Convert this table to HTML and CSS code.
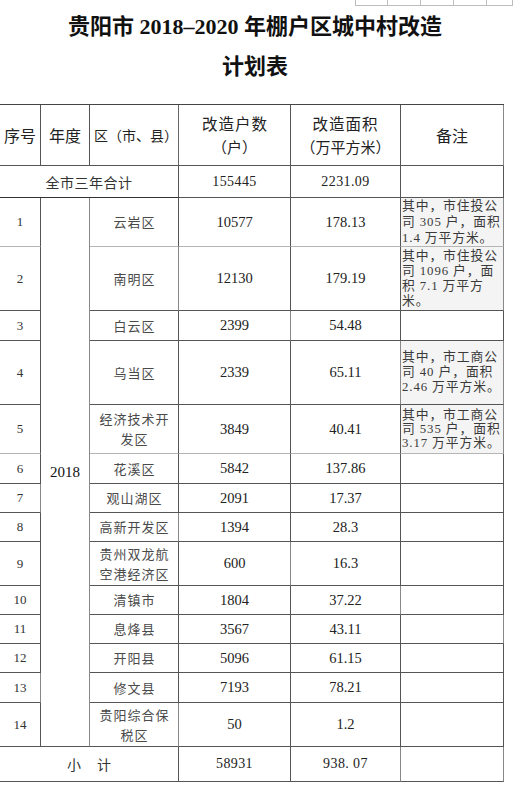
FILE: index.html
```html
<!DOCTYPE html>
<html lang="zh-CN">
<head>
<meta charset="utf-8">
<title>贵阳市 2018–2020 年棚户区城中村改造计划表</title>
<link rel="stylesheet" href="styles.css">
</head>
<body>
<div class="frag">
  <span class="fc"></span><span class="fc"></span><span class="fc"></span><span class="fc"></span><span class="fc last"></span>
</div>
<h1 class="title">贵阳市 2018–2020 年棚户区城中村改造<br>计划表</h1>
<div class="tbl">
  <div class="c h c0">序号</div>
  <div class="c h c1">年度</div>
  <div class="c h c2 nowrap narrow">区（市、县）</div>
  <div class="c h c3 col"><span class="h1">改造户数</span><span class="h2">（户）</span></div>
  <div class="c h c4 col"><span class="h1">改造面积</span><span class="h2">（万平方米）</span></div>
  <div class="c h c5">备注</div>

  <div class="c span3 total">全市三年合计</div>
  <div class="c num mono">155445</div>
  <div class="c num mono">2231.09</div>
  <div class="c"></div>

  <div class="c idx light-b">1</div>
  <div class="c year">2018</div>
  <div class="c dist light-b">云岩区</div>
  <div class="c num light-b">10577</div>
  <div class="c num light-b">178.13</div>
  <div class="c note light-b lh16">其中，市住投公<br>司 305 户，面积<br>1.4 万平方米。</div>

  <div class="c idx">2</div>
  <div class="c dist">南明区</div>
  <div class="c num">12130</div>
  <div class="c num">179.19</div>
  <div class="c note">其中，市住投公<br>司 1096 户，面<br>积 7.1 万平方<br>米。</div>

  <div class="c idx">3</div>
  <div class="c dist">白云区</div>
  <div class="c num">2399</div>
  <div class="c num">54.48</div>
  <div class="c"></div>

  <div class="c idx">4</div>
  <div class="c dist">乌当区</div>
  <div class="c num">2339</div>
  <div class="c num">65.11</div>
  <div class="c note">其中，市工商公<br>司 40 户，面积<br>2.46 万平方米。</div>

  <div class="c idx light-b">5</div>
  <div class="c dist light-b">经济技术开<br>发区</div>
  <div class="c num light-b">3849</div>
  <div class="c num light-b">40.41</div>
  <div class="c note light-b lh14">其中，市工商公<br>司 535 户，面积<br>3.17 万平方米。</div>

  <div class="c idx">6</div>
  <div class="c dist">花溪区</div>
  <div class="c num">5842</div>
  <div class="c num">137.86</div>
  <div class="c"></div>

  <div class="c idx">7</div>
  <div class="c dist">观山湖区</div>
  <div class="c num">2091</div>
  <div class="c num">17.37</div>
  <div class="c"></div>

  <div class="c idx">8</div>
  <div class="c dist">高新开发区</div>
  <div class="c num">1394</div>
  <div class="c num">28.3</div>
  <div class="c"></div>

  <div class="c idx">9</div>
  <div class="c dist">贵州双龙航<br>空港经济区</div>
  <div class="c num">600</div>
  <div class="c num">16.3</div>
  <div class="c"></div>

  <div class="c idx">10</div>
  <div class="c dist">清镇市</div>
  <div class="c num">1804</div>
  <div class="c num">37.22</div>
  <div class="c"></div>

  <div class="c idx">11</div>
  <div class="c dist">息烽县</div>
  <div class="c num">3567</div>
  <div class="c num">43.11</div>
  <div class="c"></div>

  <div class="c idx">12</div>
  <div class="c dist">开阳县</div>
  <div class="c num">5096</div>
  <div class="c num">61.15</div>
  <div class="c"></div>

  <div class="c idx">13</div>
  <div class="c dist">修文县</div>
  <div class="c num">7193</div>
  <div class="c num">78.21</div>
  <div class="c"></div>

  <div class="c idx">14</div>
  <div class="c dist">贵阳综合保<br>税区</div>
  <div class="c num">50</div>
  <div class="c num">1.2</div>
  <div class="c"></div>

  <div class="c span3 sub">小计</div>
  <div class="c num mono">58931</div>
  <div class="c num mono">938. 07</div>
  <div class="c"></div>
</div>
</body>
</html>
```
FILE: styles.css
```css
html, body {
  margin: 0;
  padding: 0;
  background: #ffffff;
}
body {
  width: 526px;
  height: 789px;
  overflow: hidden;
  font-family: "Liberation Serif", "Noto Sans CJK SC", serif;
  color: #222;
}
.frag {
  display: flex;
  margin-left: 355px;
  width: 158px;
  height: 6px;
}
.fc {
  flex: 0 0 33px;
  box-sizing: border-box;
  border-right: 1px solid #bdbdbd;
  border-bottom: 1px solid #bdbdbd;
}
.fc:first-child {
  border-left: 1px solid #bdbdbd;
}
.fc.last {
  flex-basis: 26px;
}
.title {
  margin: 1px 0 0 0;
  width: 510px;
  text-align: center;
  font-size: 22px;
  line-height: 40px;
  font-weight: bold;
  color: #111;
  font-family: "Liberation Serif", "Noto Sans CJK SC", serif;
}
.tbl {
  margin-top: 17px;
  display: grid;
  width: 504px;
  grid-template-columns: 41px 49px 89px 112px 110px 103px;
  grid-template-rows: 61px 32px 49px 64px 30px 64px 49px 30px 29px 29px 44px 29px 29px 29px 30px 44px 35px;
  border-top: 1px solid #444;
  box-sizing: content-box;
}
.c {
  box-sizing: border-box;
  border-right: 1px solid #555;
  border-bottom: 1px solid #555;
  display: flex;
  align-items: center;
  justify-content: center;
  text-align: center;
  font-size: 14px;
  color: #2a2a2a;
  min-width: 0;
}
.h {
  font-size: 16px;
  color: #222;
  font-family: "Noto Sans CJK SC", sans-serif;
}
.h.narrow {
  font-size: 14px;
  letter-spacing: 0;
  justify-content: flex-start;
  padding-left: 4px;
  border-right-color: #666;
}
.nowrap {
  white-space: nowrap;
}
.col {
  flex-direction: column;
}
.h1 {
  font-size: 15.5px;
  letter-spacing: 1px;
  line-height: 23px;
}
.h2 {
  font-size: 15px;
  line-height: 23px;
}
.c3 .h1 {
  padding-left: 1px;
}
.span3 {
  grid-column: 1 / 4;
}
.total {
  font-family: "Noto Sans CJK SC", sans-serif;
  font-size: 14px;
  letter-spacing: 0.5px;
  color: #333;
  border-bottom-color: #333;
}
.sub {
  font-family: "Noto Sans CJK SC", sans-serif;
  font-size: 14px;
  letter-spacing: 16px;
  padding-left: 16px;
  color: #333;
}
.num {
  font-size: 14.5px;
  color: #222;
}
.mono {
  letter-spacing: 0.4px;
  font-size: 14px;
}
.idx {
  font-size: 13px;
  color: #333;
}
.year {
  grid-column: 2;
  grid-row: 3 / 17;
  font-size: 15px;
  color: #111;
  border-right-color: #999;
}
.dist {
  font-family: "Noto Sans CJK SC", sans-serif;
  font-size: 13px;
  letter-spacing: 1px;
  line-height: 20px;
  color: #4a4a4a;
  padding-left: 1px;
}
.note {
  justify-content: flex-start;
  text-align: left;
  white-space: nowrap;
  font-size: 12.8px;
  letter-spacing: 0.9px;
  line-height: 15px;
  color: #3a3a3a;
  background: #f4f4f4;
  padding-left: 1px;
  overflow: hidden;
  font-family: "Liberation Serif", "Noto Sans CJK SC", serif;
}
.lh16 {
  line-height: 16.3px;
}
.lh14 {
  line-height: 14px;
}
.light-b {
  border-bottom-color: #b5b5b5;
}
.tbl > .c:nth-child(6n),
.tbl > .c:last-child,
.tbl > .note {
  border-right-color: #888;
}
```
